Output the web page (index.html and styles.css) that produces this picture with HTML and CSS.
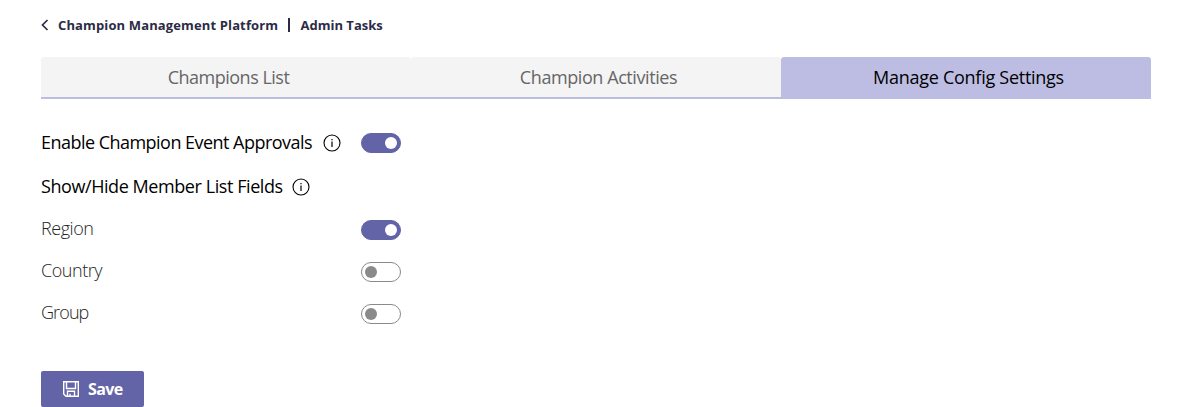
FILE: index.html
```html
<!DOCTYPE html>
<html lang="en">
<head>
<meta charset="utf-8">
<title>Admin Tasks</title>
<link rel="stylesheet" href="styles.css">
</head>
<body>
<main class="page">
  <nav class="breadcrumb">
    <svg class="back" width="8" height="12" viewBox="0 0 8 12"><path d="M6.5 1 1.5 6l5 5" fill="none" stroke="currentColor" stroke-width="1.7"/></svg>
    <span class="crumb-root">Champion Management Platform</span>
    <span class="divider"></span>
    <span class="crumb-page">Admin Tasks</span>
  </nav>
  <div class="tabs">
    <div class="tab"><span class="tab-list">Champions List</span></div>
    <div class="tab"><span class="tab-activities">Champion Activities</span></div>
    <div class="tab active"><span class="tab-config">Manage Config Settings</span></div>
  </div>
  <section class="settings">
    <div class="row row-approvals">
      <div class="label"><span class="approvals">Enable Champion Event Approvals</span>
        <svg class="info" width="18" height="18" viewBox="0 0 18 18"><circle cx="9" cy="9" r="8" fill="none" stroke="currentColor" stroke-width="1.1"/><path d="M9 7.5V13M9 4.9v1.3" stroke="currentColor" stroke-width="1.2"/></svg>
      </div>
      <span class="toggle on"></span>
    </div>
    <div class="row row-fields">
      <div class="label"><span class="fields">Show/Hide Member List Fields</span>
        <svg class="info" width="18" height="18" viewBox="0 0 18 18"><circle cx="9" cy="9" r="8" fill="none" stroke="currentColor" stroke-width="1.1"/><path d="M9 7.5V13M9 4.9v1.3" stroke="currentColor" stroke-width="1.2"/></svg>
      </div>
    </div>
    <div class="row field"><div class="label"><span class="region">Region</span></div><span class="toggle on"></span></div>
    <div class="row field"><div class="label"><span class="country">Country</span></div><span class="toggle"></span></div>
    <div class="row field"><div class="label"><span class="group">Group</span></div><span class="toggle"></span></div>
  </section>
  <button class="save">
    <svg width="16" height="16" viewBox="0 0 16 16" fill="none" stroke="currentColor" stroke-width="1.4"><path d="M.7.7h14.6v14.6H3L.7 13zM3.5.7v6.8h9V.7M4.5 15.3v-5h7v5M7 15.3v-2.6"/></svg>
    <span>Save</span>
  </button>
</main>
</body>
</html>
```
FILE: styles.css
```css
body { margin: 0; background: #fff; font-family: "Open Sans", "Noto Sans", sans-serif; overflow: hidden; }
.page { padding: 15px 31px 0 41px; }
.breadcrumb { display: flex; align-items: center; height: 20px; font-size: 13px; font-weight: 700; color: #2c2b45; white-space: nowrap; }
.back { margin-right: 9px; }
.crumb-root { width: 220px; letter-spacing: 0.13px; }
.divider { width: 2px; height: 14px; margin: 0 11px 0 10px; background: #2c2b45; }
.crumb-page { margin-left: -0.5px; }
.tabs { display: grid; grid-template-columns: repeat(3, 1fr); height: 40px; margin-top: 22px; border-bottom: 2px solid #bdbde3; }
.tab { display: flex; align-items: center; justify-content: center; padding-left: 5px; background: #f4f4f4; border-radius: 3px 3px 0 0; color: #666; font-size: 18px; white-space: nowrap; }
.tab.active { background: #bdbde3; color: #000; }
.tab-list { letter-spacing: -0.5px; }
.tab-activities { letter-spacing: -0.42px; }
.tab-config { letter-spacing: -0.27px; }
.settings { display: flex; flex-direction: column; padding-top: 22px; }
.row { display: flex; align-items: center; height: 42px; }
.row-approvals { height: 44px; }
.row-fields { height: 44px; }
.label { display: flex; align-items: center; width: 320px; font-size: 18px; color: #000; white-space: nowrap; }
.label span { padding-bottom: 2px; }
.approvals { width: 281.5px; letter-spacing: -0.53px; }
.fields { width: 250.5px; letter-spacing: -0.43px; }
.field .label { font-weight: 300; color: #242424; }
.field .label span { padding-bottom: 4px; }
.region { letter-spacing: -0.45px; }
.country { letter-spacing: -0.45px; }
.group { letter-spacing: -0.9px; }
.info { flex: none; }
.toggle { box-sizing: border-box; display: flex; align-items: center; width: 40px; height: 20px; padding: 0 3px; border: 1px solid #8a8a8a; border-radius: 10px; }
.toggle::before { content: ""; width: 12px; height: 12px; border-radius: 50%; background: #8a8a8a; }
.toggle.on { justify-content: flex-end; border-color: #6264a7; background: #6264a7; }
.toggle.on::before { background: #fff; }
.save { display: flex; align-items: center; gap: 9px; width: 103px; height: 36px; margin-top: 36px; padding: 0 0 0 22px; border: 0; border-radius: 2px; background: #6264a7; color: #fff; font: 700 16px "Open Sans", sans-serif; letter-spacing: -0.6px; }
```
